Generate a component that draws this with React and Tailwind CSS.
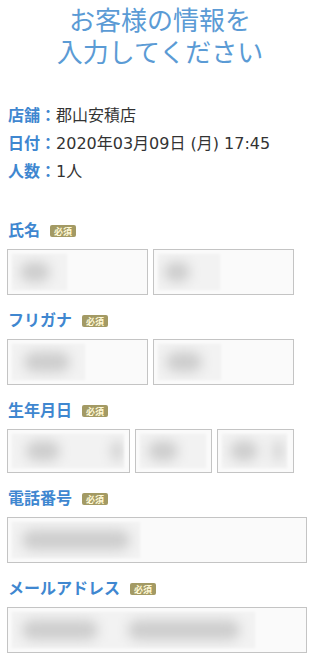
import React from "react";

const FONT = "font-['Noto_Sans_CJK_JP','Noto_Sans',sans-serif]";
const VALUE_FONT = "font-['DejaVu_Sans','Noto_Sans_CJK_JP',sans-serif]";

function Badge() {
  return (
    <span className="ml-[10px] mt-[4px] inline-flex h-[12px] w-[26px] items-center justify-center rounded-[2px] bg-[#a39a64] text-[9px] font-bold leading-none text-[#fff9d6]">
      必須
    </span>
  );
}

function Label({ children }) {
  return (
    <div className="flex h-[20px] items-center">
      <span className="text-[16px] font-bold leading-[20px] text-[#3f87d0]">{children}</span>
      <Badge />
    </div>
  );
}

function Input({ w, h = 46, rect, blobs }) {
  return (
    <div
      className="flex shrink-0 items-stretch border border-[#c4c4c4] bg-[#fafafa] p-[4px]"
      style={{ width: w, height: h }}
    >
      <div
        className="flex items-center overflow-hidden bg-[#f2f2f2] blur-[1px]"
        style={{ width: rect }}
      >
        {blobs.map((b, i) => (
          <div
            key={i}
            className="shrink-0 rounded-full bg-[#cdcdcd] blur-[6px]"
            style={{ marginLeft: b[0], width: b[1], height: 20 }}
          />
        ))}
      </div>
    </div>
  );
}

function InfoRow({ label, value }) {
  return (
    <div className="flex h-[28px] items-baseline">
      <span className="font-bold leading-[26px] text-[#3f87d0]">{label}</span>
      <span className={`${VALUE_FONT} leading-[26px]`}>{value}</span>
    </div>
  );
}

export default function App() {
  return (
    <div className={`w-[320px] bg-white ${FONT}`}>
      <h1 className="pt-[3px] text-center text-[26px] font-normal leading-[32px] text-[#5b9bd5]">
        <span className="block">お客様の情報を</span>
        <span className="block">入力してください</span>
      </h1>

      <div className="mt-[34px] pl-[8px] text-[16px] text-[#333333]">
        <InfoRow label="店舗：" value="郡山安積店" />
        <InfoRow label="日付：" value="2020年03月09日 (月) 17:45" />
        <InfoRow label="人数：" value="1人" />
      </div>

      <div className="mt-[34px] flex flex-col pl-[7px]">
        <div className="pl-[1px]">
          <Label>氏名</Label>
        </div>
        <div className="mt-[10px] flex gap-[5px]">
          <Input w={141} rect={55} blobs={[[8, 30]]} />
          <Input w={141} rect={62} blobs={[[6, 26]]} />
        </div>

        <div className="mt-[14px] pl-[1px]">
          <Label>フリガナ</Label>
        </div>
        <div className="mt-[10px] flex gap-[5px]">
          <Input w={141} rect={73} blobs={[[12, 46]]} />
          <Input w={141} rect={63} blobs={[[8, 36]]} />
        </div>

        <div className="mt-[14px] pl-[1px]">
          <Label>生年月日</Label>
        </div>
        <div className="mt-[10px] flex gap-[5px]">
          <Input w={123} h={44} rect={112} blobs={[[14, 34], [52, 10]]} />
          <Input w={77} h={44} rect={66} blobs={[[8, 30]]} />
          <Input w={77} h={44} rect={65} blobs={[[8, 28], [16, 8]]} />
        </div>

        <div className="mt-[14px] pl-[1px]">
          <Label>電話番号</Label>
        </div>
        <div className="mt-[10px] flex">
          <Input w={300} rect={128} blobs={[[10, 108]]} />
        </div>

        <div className="mt-[14px] pl-[1px]">
          <Label>メールアドレス</Label>
        </div>
        <div className="mt-[10px] flex">
          <Input w={300} rect={243} blobs={[[10, 76], [30, 112]]} />
        </div>
      </div>
    </div>
  );
}
